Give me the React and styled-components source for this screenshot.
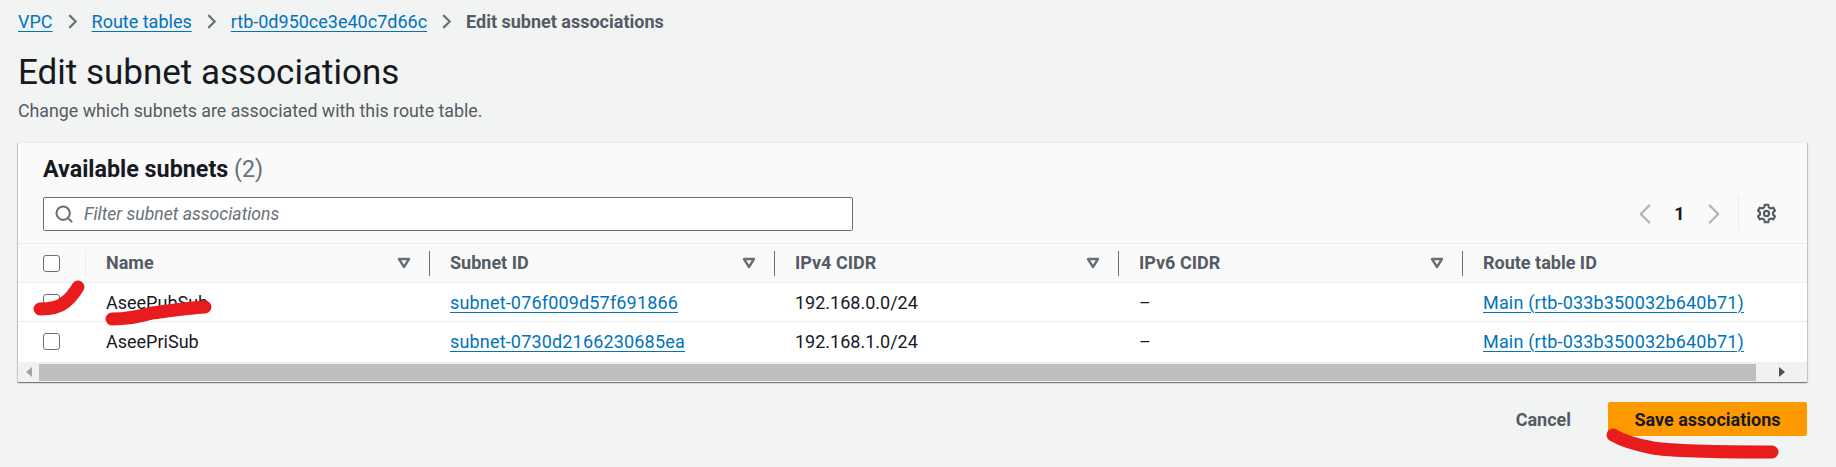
import React from "react";
import styled, { createGlobalStyle } from "styled-components";
import { Search, ChevronLeft, ChevronRight } from "lucide-react";

const GlobalStyle = createGlobalStyle`
  html, body {
    margin: 0;
    padding: 0;
    background: #f2f3f3;
    font-family: Roboto, "Noto Sans", sans-serif;
    color: #16191f;
  }
`;

const Page = styled.div`
  position: relative;
  width: 1836px;
  height: 467px;
  box-sizing: border-box;
  padding: 8px 29px 0 18px;
  overflow: hidden;
`;

const Crumbs = styled.nav`
  display: flex;
  align-items: center;
  height: 26px;
  font-size: 18px;
  gap: 11px;
`;

const Link = styled.a`
  color: #0073bb;
  text-decoration: underline;
  text-underline-offset: 3px;
  text-decoration-thickness: 1px;
`;

const CellLink = styled(Link)`
  letter-spacing: 0.17px;
`;

const CrumbCurrent = styled.span`
  color: #545b64;
  font-weight: 700;
`;

const Title = styled.h1`
  margin: 18px 0 0;
  font-size: 35px;
  line-height: 42px;
  font-weight: 400;
`;

const Description = styled.p`
  margin: 6px 0 0;
  font-size: 17.8px;
  line-height: 22px;
  color: #545b64;
`;

const Panel = styled.section`
  margin-top: 20px;
  background: #fff;
  box-shadow: 0 1px 1px 0 rgba(0, 28, 36, 0.35), 1px 1px 1px 0 rgba(0, 28, 36, 0.15),
    -1px 1px 1px 0 rgba(0, 28, 36, 0.15);
  border-top: 1px solid #eaeded;
  overflow: hidden;
`;

const PanelHeader = styled.header`
  background: #fafafa;
  height: 100px;
  box-sizing: border-box;
  padding: 12px 25px 0;
`;

const PanelTitle = styled.h2`
  margin: 0;
  font-size: 23.3px;
  line-height: 28px;
  font-weight: 700;

  span {
    font-weight: 400;
    color: #687078;
  }
`;

const Toolbar = styled.div`
  display: flex;
  align-items: center;
  justify-content: space-between;
  margin-top: 13px;
`;

const Filter = styled.div`
  display: flex;
  align-items: center;
  gap: 10px;
  width: 810px;
  height: 34px;
  box-sizing: border-box;
  padding: 0 10px;
  background: #fff;
  border: 1px solid #687078;
  border-radius: 2px;
  font-size: 17.6px;
  font-style: italic;
  color: #687078;
`;

const Pager = styled.div`
  display: flex;
  align-items: center;
  height: 35px;
  margin-right: 5px;
  color: #aab7b8;
`;

const PageNumber = styled.span`
  width: 35px;
  text-align: center;
  font-size: 18px;
  font-weight: 700;
  color: #16191f;
`;

const PagerDivider = styled.div`
  width: 1px;
  height: 35px;
  margin: 0 17px 0 7px;
  background: #eaeded;
`;

const Row = styled.div`
  display: grid;
  grid-template-columns: 68px 344px 345px 344px 344px 345px;
  align-items: center;
  height: 39px;
  box-sizing: border-box;
  border-top: 1px solid #eaeded;
  background: ${(p) => (p.$head ? "#fafafa" : "#fff")};
  font-size: 18px;
`;

const TableBody = styled.div`
  padding-bottom: 2px;
  background: #fff;
`;

const CheckCell = styled.div`
  display: flex;
  align-items: center;
  height: 25px;
  padding-left: 25px;
  border-right: 1px solid ${(p) => (p.$head ? "#eaeded" : "transparent")};
`;

const Checkbox = styled.span`
  display: block;
  width: 17px;
  height: 17px;
  box-sizing: border-box;
  border: 1.5px solid #687078;
  border-radius: 3px;
  background: #fff;
`;

const HeadCell = styled.div`
  display: flex;
  align-items: center;
  justify-content: space-between;
  height: 25px;
  padding: 0 18px 0 20px;
  border-right: 1px solid ${(p) => (p.$last ? "transparent" : "#687078")};
  font-weight: 700;
  color: #545b64;
`;

const HeadLabel = styled.span`
  margin-top: -2px;
`;

const Cell = styled.div`
  padding-left: 20px;
  white-space: nowrap;
`;

const ScrollTrack = styled.div`
  display: flex;
  align-items: center;
  height: 20px;
  background: #f1f1f1;
  color: #505050;
`;

const ScrollArrow = styled.div`
  display: flex;
  align-items: center;
  justify-content: center;
  width: ${(p) => p.$width}px;
`;

const ScrollThumb = styled.div`
  flex: 1;
  height: 17px;
  background: #bebebe;
`;

const Footer = styled.footer`
  display: flex;
  align-items: center;
  justify-content: flex-end;
  gap: 37px;
  margin-top: 20px;
`;

const CancelButton = styled.span`
  font-size: 18px;
  font-weight: 700;
  color: #545b64;
`;

const SaveButton = styled.span`
  display: flex;
  align-items: center;
  justify-content: center;
  width: 199px;
  height: 34px;
  background: #ff9900;
  border-radius: 2px;
  font-size: 18px;
  font-weight: 700;
  color: #16191f;
`;

const Scribbles = styled.svg`
  position: absolute;
  top: 0;
  left: 0;
  pointer-events: none;
`;

const SortIcon = () => (
  <svg width="14" height="12" viewBox="0 0 14 12">
    <path d="M2 2h10L7 10z" fill="none" stroke="#687078" strokeWidth="2.4" strokeLinejoin="round" />
  </svg>
);

const CrumbChevron = () => (
  <svg width="17" height="17" viewBox="0 0 16 16">
    <path d="M5 2l6 6-6 6" fill="none" stroke="#687078" strokeWidth="2" />
  </svg>
);

const GearIcon = () => (
  <svg width="21" height="21" viewBox="0 0 24 24" fill="none" stroke="#545b64" strokeWidth="2.4" strokeLinejoin="round">
    <path d="M10 2h4l.6 3 2.2 1.3 2.9-1 2 3.4-2.3 2v2.600l2.300 2-2 3.400-2.900-1L14.600 19l-.6 3h-4l-.6-3-2.200-1.300-2.900 1-2-3.400 2.300-2v-2.600l-2.300-2 2-3.400 2.900 1L9.400 5z" />
    <circle cx="12" cy="12" r="3" />
  </svg>
);

const columns = ["Name", "Subnet ID", "IPv4 CIDR", "IPv6 CIDR"];

const subnets = [
  { name: "AseePubSub", id: "subnet-076f009d57f691866", cidr: "192.168.0.0/24" },
  { name: "AseePriSub", id: "subnet-0730d2166230685ea", cidr: "192.168.1.0/24" },
];

const App = () => (
  <Page>
    <GlobalStyle />
    <Crumbs>
      <Link>VPC</Link>
      <CrumbChevron />
      <Link>Route tables</Link>
      <CrumbChevron />
      <Link>rtb-0d950ce3e40c7d66c</Link>
      <CrumbChevron />
      <CrumbCurrent>Edit subnet associations</CrumbCurrent>
    </Crumbs>
    <Title>Edit subnet associations</Title>
    <Description>Change which subnets are associated with this route table.</Description>
    <Panel>
      <PanelHeader>
        <PanelTitle>
          Available subnets <span>(2)</span>
        </PanelTitle>
        <Toolbar>
          <Filter>
            <Search size={20} strokeWidth={2.5} color="#687078" />
            Filter subnet associations
          </Filter>
          <Pager>
            <ChevronLeft size={34} strokeWidth={1.6} />
            <PageNumber>1</PageNumber>
            <ChevronRight size={34} strokeWidth={1.6} />
            <PagerDivider />
            <GearIcon />
          </Pager>
        </Toolbar>
      </PanelHeader>
      <Row $head>
        <CheckCell $head>
          <Checkbox />
        </CheckCell>
        {columns.map((c) => (
          <HeadCell key={c}>
            <HeadLabel>{c}</HeadLabel>
            <SortIcon />
          </HeadCell>
        ))}
        <HeadCell $last>
          <HeadLabel>Route table ID</HeadLabel>
        </HeadCell>
      </Row>
      <TableBody>
        {subnets.map((s) => (
          <Row key={s.id}>
            <CheckCell>
              <Checkbox />
            </CheckCell>
            <Cell>{s.name}</Cell>
            <Cell>
              <CellLink>{s.id}</CellLink>
            </Cell>
            <Cell>{s.cidr}</Cell>
            <Cell>–</Cell>
            <Cell>
              <CellLink>Main (rtb-033b350032b640b71)</CellLink>
            </Cell>
          </Row>
        ))}
      </TableBody>
      <ScrollTrack>
        <ScrollArrow $width={21}>
          <svg width="6" height="10" viewBox="0 0 6 10">
            <path d="M6 0v10L0 5z" fill="#a3a3a3" />
          </svg>
        </ScrollArrow>
        <ScrollThumb />
        <ScrollArrow $width={51}>
          <svg width="6" height="10" viewBox="0 0 6 10">
            <path d="M0 0v10l6-5z" fill="#505050" />
          </svg>
        </ScrollArrow>
      </ScrollTrack>
    </Panel>
    <Footer>
      <CancelButton>Cancel</CancelButton>
      <SaveButton>Save associations</SaveButton>
    </Footer>
    <Scribbles width="1836" height="467" viewBox="0 0 1836 467">
      <g fill="none" stroke="#e81c1c" strokeLinecap="round" strokeLinejoin="round" strokeWidth="13">
        <path d="M40 309c10 0 18-1 24-6 6-4 11-11 14-16" />
        <path d="M112 319c14 0 26-2 40-6 16-2 36-5 53-6" />
        <path d="M1613 435c10 6 24 10 40 13 20 3 50 4 119 4" />
      </g>
    </Scribbles>
  </Page>
);

export default App;
